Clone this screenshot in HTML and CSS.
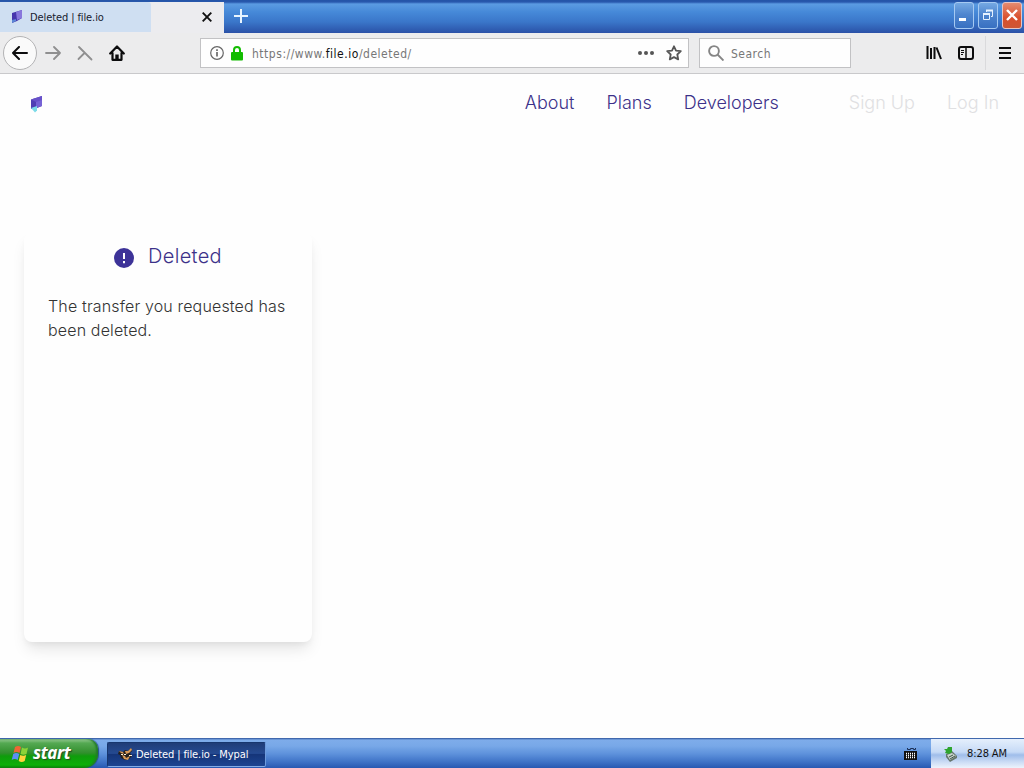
FILE: index.html
```html
<!DOCTYPE html>
<html lang="en">
<head>
    <meta charset="UTF-8">
    <title>Deleted | file.io</title>
    <link rel="stylesheet" href="styles.css">
</head>
<body>
    <div class="tabbar">
        <div class="tab">
            <div class="tab-label">
                <svg class="favicon" width="12" height="16" viewBox="0 0 12 16">
                    <path d="M1 4l10-3v8l-5 3-5 2z" fill="#4836ad"/>
                    <path d="M5 3l6-2v8l-5 2z" fill="#8877dc"/>
                    <path d="M1 11l4-1v2l-4 2z" fill="#5c86d5"/>
                </svg>
                <span class="tab-title">Deleted | file.io</span>
            </div>
            <svg class="tab-close" width="10" height="10" viewBox="0 0 10 10">
                <path d="M.7.7l8.6 8.6M9.3.7L.7 9.3" stroke="#111" stroke-width="1.9"/>
            </svg>
        </div>
        <svg class="new-tab" width="14" height="14" viewBox="0 0 14 14">
            <path d="M7 0v14M0 7h14" stroke="#e8f5ff" stroke-width="2"/>
        </svg>
        <div class="window-buttons">
            <div class="win-btn">
                <svg width="18" height="24" viewBox="0 0 18 24"><path d="M4 16.500h7" stroke="#fff" stroke-width="3"/></svg>
            </div>
            <div class="win-btn">
                <svg width="18" height="24" viewBox="0 0 18 24" fill="none" stroke="#e6f2ff"><path d="M7.500 9V7.500h6v6H12"/><path d="M7 7.500h7" stroke-width="2"/><path d="M4.500 10.500h6v6h-6z"/><path d="M4 11h7" stroke-width="2"/></svg>
            </div>
            <div class="win-btn win-close">
                <svg width="18" height="24" viewBox="0 0 18 24"><path d="M4 7l10 10M14 7L4 17" stroke="#fff" stroke-width="2.400"/></svg>
            </div>
        </div>
    </div>

    <div class="toolbar">
        <div class="back">
            <svg width="16" height="14" viewBox="0 0 16 14" fill="none" stroke="#0c0c0d" stroke-width="2" stroke-linecap="round" stroke-linejoin="round"><path d="M15 7H1M7 1L1 7l6 6"/></svg>
        </div>
        <svg class="forward" width="16" height="14" viewBox="0 0 16 14" fill="none" stroke="#8f8f90" stroke-width="1.800" stroke-linecap="round" stroke-linejoin="round"><path d="M1 7h14M9 1l6 6-6 6"/></svg>
        <svg class="stop" width="16" height="16" viewBox="0 0 16 16" fill="none" stroke="#8f8f90" stroke-width="1.800" stroke-linecap="round"><path d="M2 2l12.500 12.500M7.500 8L1.500 14"/></svg>
        <svg class="home" width="16" height="16" viewBox="0 0 16 16" fill="none" stroke="#0c0c0d" stroke-width="2.200" stroke-linecap="round" stroke-linejoin="round"><path d="M1.200 8.500L8 1.500l6.800 7M3.500 8v6.800h9V8"/><path d="M6.300 15V9.500h3.400V15z" fill="#0c0c0d" stroke="none"/></svg>

        <div class="urlbar">
            <svg width="14" height="14" viewBox="0 0 14 14"><circle cx="7" cy="7" r="6.300" fill="none" stroke="#666" stroke-width="1.200"/><path d="M7 6v4.500M7 3.200V5" stroke="#555" stroke-width="1.500"/></svg>
            <svg class="lock" width="12" height="15" viewBox="0 0 12 15"><rect y="6" width="12" height="8.500" rx="1" fill="#12bc00"/><path d="M3 7V4a3 3 0 0 1 6 0v3" fill="none" stroke="#12bc00" stroke-width="2"/></svg>
            <span class="url">https://www.<b>file.io</b>/deleted/</span>
            <svg class="dots" width="16" height="4" viewBox="0 0 16 4" fill="#555"><circle cx="2" cy="2" r="2"/><circle cx="8" cy="2" r="2"/><circle cx="14" cy="2" r="2"/></svg>
            <svg class="star" width="16" height="16" viewBox="0 0 16 16"><path d="M8 1.300l2 4.300 4.800.6-3.500 3.300.9 4.900L8 12.100l-4.200 2.300.9-4.900L1.200 6.200 6 5.600z" fill="none" stroke="#555" stroke-width="1.800" stroke-linejoin="round"/></svg>
        </div>
        <div class="searchbar">
            <svg width="16" height="16" viewBox="0 0 16 16" fill="none" stroke="#858585" stroke-width="1.900"><circle cx="6" cy="6" r="4.900"/><path d="M9.500 9.500l6 6"/></svg>
            <span>Search</span>
        </div>

        <div class="tools">
            <svg width="16" height="14" viewBox="0 0 16 14" stroke="#0c0c0d" stroke-width="2"><path d="M1.500 0v13M5 2v11M8.500 1v12M10.500 1.500l4.500 11.500"/></svg>
            <svg class="sidebar" width="16" height="14" viewBox="0 0 16 14" fill="none" stroke="#0c0c0d"><rect x="1" y="1" width="14" height="12" rx="2" stroke-width="2"/><path d="M8 1v12" stroke-width="1.500"/><path d="M3 4.500h3M3 6.500h3M3 8.500h2"/></svg>
            <div class="menu">
                <svg width="12" height="12" viewBox="0 0 12 12" stroke="#0c0c0d" stroke-width="2"><path d="M0 1h12M0 6h12M0 11h12"/></svg>
            </div>
        </div>
    </div>

    <main class="page">
        <header class="site-header">
            <svg class="logo" width="13" height="17" viewBox="0 0 13 17">
                <path d="M1 3.500L12 0v10l-5 2-6 1z" fill="#4f3eb4"/>
                <path d="M6 3l6-3v10l-6 2z" fill="#7662d5"/>
                <path d="M1 3.500L12 0v4L6 6z" fill="#6751c9"/>
                <path d="M1 12l6-2v4.500L5 16.500z" fill="#7cdbe8"/>
            </svg>
            <nav class="nav">
                <a class="about">About</a>
                <a class="plans">Plans</a>
                <a class="developers">Developers</a>
                <a class="faint signup">Sign Up</a>
                <a class="faint login">Log In</a>
            </nav>
        </header>
        <section class="card">
            <h1>
                <svg width="20" height="20" viewBox="0 0 20 20"><circle cx="10" cy="10" r="10" fill="#3d3398"/><path d="M10 5v6M10 13v2.200" stroke="#fff" stroke-width="2"/></svg>
                <span>Deleted</span>
            </h1>
            <p>The transfer you requested has<br>been deleted.</p>
        </section>
    </main>

    <footer class="taskbar">
        <div class="start">
            <svg width="18" height="18" viewBox="0 0 18 18">
                <path d="M4 2q3-2 6 0L8.500 8q-3-2-6 0z" fill="#ef6535"/>
                <path d="M11 2.500q3 2 6 0L15.500 9q-3 1.500-6 0z" fill="#8bd338"/>
                <path d="M2.200 9q3-2 6 0l-1.500 6q-3-2-6 0z" fill="#5b8ff5"/>
                <path d="M9.200 10q3 1.500 6 0l-1.500 6q-3 2-6 0z" fill="#ffd33c"/>
            </svg>
            <span>start</span>
        </div>
        <div class="task">
            <svg width="16" height="14" viewBox="0 0 16 14">
                <path d="M1 4l4 1 2-2 3 1 3-3 1 3-2 2 2 3-3 3-4 1-4-2-1-3-2-1z" fill="#26201c"/>
                <path d="M1 4l4 1 1 2-3-1zM7 4l3 0 3-3 1 2-3 3-3 1zM4 8l3 1 1 2 4-2-2 4-4-1z" fill="#d89a58"/>
                <path d="M6 7h2v1H6zM11 8h3v1h-3zM3 7h2v1H3z" fill="#fff0d8"/>
            </svg>
            <span>Deleted | file.io - Mypal</span>
        </div>
        <svg class="keyboard" width="13" height="13" viewBox="0 0 13 13">
            <path d="M3.500 1v1.500h3v-1h3v1h2V1" fill="none" stroke="#1b2f55"/>
            <rect y="4" width="13" height="9" fill="#111"/>
            <path d="M2 6.500h9M2 8.500h9M2 10.500h9" stroke="#fff" stroke-width="1.300" stroke-dasharray="1 1"/>
        </svg>
        <div class="tray">
            <svg width="14" height="16" viewBox="0 0 14 16">
                <path d="M3 8l6-3 5 5v2l-7 4-4-5z" fill="#66766d"/>
                <path d="M4 9l5-2 4 3-6 4z" fill="#c9d6cf"/>
                <path d="M6 11l4-2M7 13l5-3" stroke="#415247"/>
                <path d="M1 3h3l1-2h4v5L6 8 2 7l1-2z" fill="#2fa52f"/>
            </svg>
            <span>8:28 AM</span>
        </div>
    </footer>
</body>
</html>
```
FILE: styles.css
```css
* {
    box-sizing: border-box;
}
body {
    display: flex;
    flex-direction: column;
    height: 100vh;
    margin: 0;
    overflow: hidden;
    background-color: #fefefe;
    font-family: "DejaVu Sans Condensed", "DejaVu Sans", sans-serif;
    font-stretch: condensed;
}
svg {
    display: block;
    flex-shrink: 0;
}
span,
a {
    white-space: nowrap;
}

/* browser */
.tabbar {
    display: flex;
    height: 33px;
    padding-top: 2px;
    background: linear-gradient(#2454a7 0, #2858ad 2px, #5b9be2 4px, #4689d8 12px, #3a76c9 22px, #2e5bb0 30px, #2b51a7 33px);
}
.tab {
    display: flex;
    width: 224px;
    background-color: #ececef;
}
.tab-label {
    display: flex;
    align-items: center;
    width: 151px;
    height: 30px;
    padding-left: 11px;
    background-color: #cfdff2;
    border-radius: 0 3px 0 0;
}
.tab-title {
    margin-left: 7px;
    color: #17202f;
    font-size: 11px;
    letter-spacing: -0.1px;
}
.tab-close {
    margin: 10px 0 0 51px;
}
.new-tab {
    margin: 7px 0 0 10px;
}
.window-buttons {
    display: flex;
    gap: 4px;
    margin: 0 2px 0 auto;
}
.win-btn {
    width: 20px;
    height: 27px;
    border: 1px solid #a5c9f2;
    border-radius: 3px;
    background: linear-gradient(#75a9e3, #4f86cf 45%, #3870c1);
}
.win-close {
    border-color: #e7c4c4;
    background: linear-gradient(#e58b70, #d9502d 60%, #ce5635);
}
.toolbar {
    display: flex;
    align-items: center;
    height: 41px;
    padding-left: 3px;
    background-color: #ececed;
    border-bottom: 1px solid #c9c9cb;
}
.back {
    display: flex;
    align-items: center;
    justify-content: center;
    width: 34px;
    height: 34px;
    background-color: #fafafa;
    border: 1px solid #b3b3b5;
    border-radius: 50%;
}
.forward {
    margin-left: 8px;
}
.stop {
    margin-left: 16px;
}
.home {
    margin-left: 16px;
}
.urlbar,
.searchbar {
    display: flex;
    align-items: center;
    height: 30px;
    background-color: #fefefe;
    border: 1px solid #c2c2c4;
    font-size: 12px;
}
.urlbar {
    width: 489px;
    margin-left: 75px;
    padding: 0 6px 0 9px;
}
.lock {
    margin-left: 7px;
}
.url {
    margin: 1px 0 0 9px;
    color: #777;
    letter-spacing: 0.52px;
}
.url b {
    color: #111;
    font-weight: normal;
}
.dots {
    margin-left: auto;
}
.star {
    margin-left: 12px;
}
.searchbar {
    width: 152px;
    margin-left: 10px;
    padding-left: 8px;
    color: #777;
}
.searchbar span {
    margin: 1px 0 0 7px;
    letter-spacing: 0.5px;
}
.tools {
    display: flex;
    align-items: center;
    height: 100%;
    margin-left: auto;
}
.sidebar {
    margin: 0 11px 0 16px;
}
.menu {
    display: flex;
    align-items: center;
    height: 34px;
    padding: 0 13px;
    border-left: 1px solid #dadadc;
}

/* site */
.page {
    flex: 1;
    font-family: Inter, sans-serif;
    font-stretch: normal;
}
.site-header {
    display: flex;
    align-items: center;
    height: 58px;
    padding: 0 25px 0 30px;
}
.logo {
    margin-top: 2px;
}
.nav {
    display: flex;
    margin: -2px 0 0 auto;
    color: #3c3189;
    font-size: 18px;
    font-weight: 300;
}
.plans,
.developers,
.login {
    margin-left: 32px;
}
.signup {
    margin-left: 70px;
}
.faint {
    color: #e0e0e2;
}
.card {
    width: 288px;
    height: 410px;
    margin: 100px 0 0 24px;
    padding: 10px 24px;
    border-radius: 8px;
    background-color: #fefefe;
    box-shadow: 0 10px 15px -3px rgba(0, 0, 0, 0.1), 0 4px 6px -2px rgba(0, 0, 0, 0.05);
}
.card h1 {
    display: flex;
    align-items: center;
    justify-content: center;
    height: 30px;
    margin: 0;
    color: #3c3189;
    font-size: 20px;
    font-weight: 300;
    letter-spacing: 0.3px;
}
.card h1 svg {
    margin-top: 2px;
}
.card h1 span {
    margin: -2px 0 0 14px;
}
.card p {
    margin: 22px 0 0;
    color: #333;
    font-size: 16px;
    font-weight: 300;
    line-height: 24px;
    letter-spacing: 0.15px;
    white-space: nowrap;
}

/* desktop taskbar */
.taskbar {
    display: flex;
    align-items: center;
    height: 30px;
    background: linear-gradient(#2c5299 0, #7eacea 2px, #78a8e8 8px, #5d91db 16px, #3e72c6 24px, #2858b1 30px);
    font-size: 11px;
}
.start {
    display: flex;
    align-items: center;
    width: 98px;
    height: 29px;
    margin-top: 1px;
    padding-left: 11px;
    border-radius: 0 10px 14px 0;
    background: linear-gradient(#9acb96 0, #55a953 4px, #318f2d 14px, #0f9c0c 17px, #0caf09 26px, #078306 29px);
    box-shadow: 1px 0 1px #244f8b, inset -2px 0 2px #237b28;
}
.start span {
    margin: -2px 0 0 4px;
    color: #fff;
    font-family: "Noto Sans", sans-serif;
    font-size: 17px;
    font-stretch: normal;
    font-style: italic;
    font-weight: bold;
    letter-spacing: -0.4px;
    text-shadow: 1px 1px 1px #254d22;
}
.task {
    display: flex;
    align-items: center;
    width: 159px;
    height: 25px;
    margin: 2px 0 0 9px;
    padding-left: 10px;
    border: 1px solid #17366e;
    border-right-color: #6e9bdc;
    border-bottom-color: #83ace5;
    border-radius: 2px;
    background: linear-gradient(#203d78, #254a91 45%, #153579 50%, #1c4491);
    color: #fff;
}
.task span {
    margin-left: 2px;
    letter-spacing: -0.1px;
}
.keyboard {
    margin: 1px 14px 0 auto;
}
.tray {
    display: flex;
    align-items: center;
    width: 93px;
    height: 29px;
    margin-top: 1px;
    padding-left: 12px;
    background: linear-gradient(#e5effc, #c6daf6 45%, #9fbdea 55%, #cdddf5 80%, #edf3fc);
    color: #111;
}
.tray span {
    margin-left: 10px;
    letter-spacing: -0.1px;
}
```
